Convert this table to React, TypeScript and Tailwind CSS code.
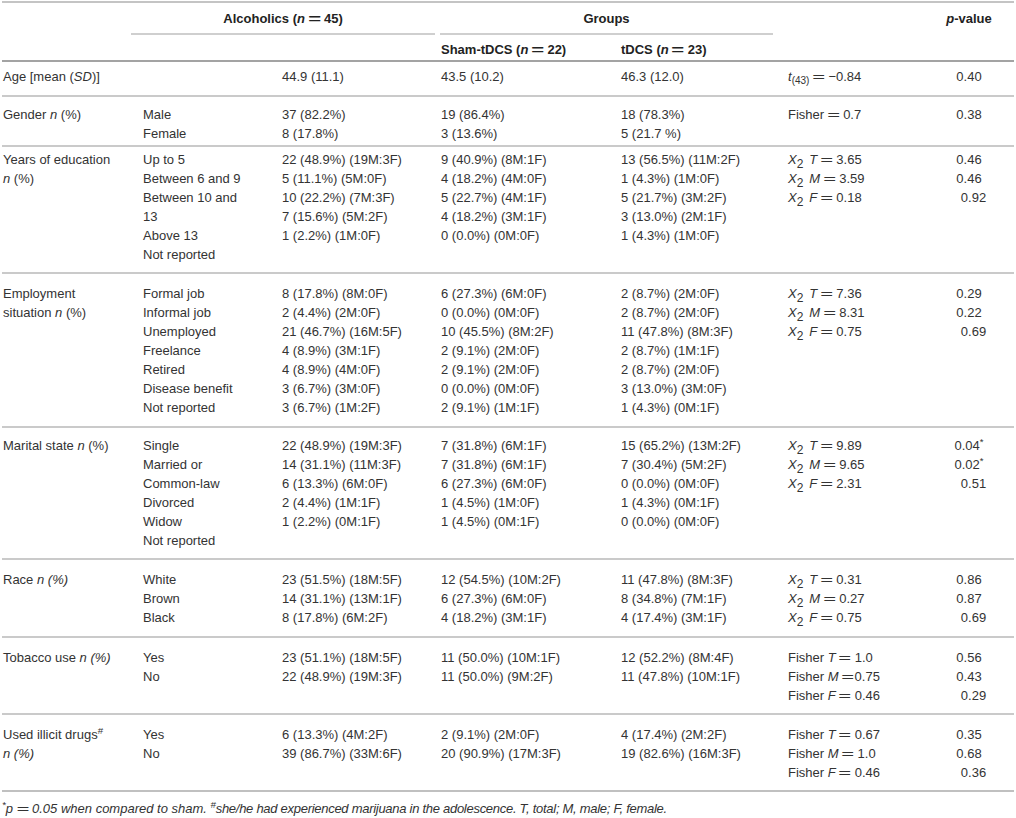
import type { ReactNode } from "react";

type Section = {
  pad: string;
  line: string;
  label: ReactNode[];
  sub: ReactNode[];
  alc: ReactNode[];
  sham: ReactNode[];
  tdcs: ReactNode[];
  stat: ReactNode[];
  p: ReactNode[];
};

const GRID = "grid grid-cols-[138px_139px_159px_180px_167px_143px_86px]";

// wide "=" like the math sign in the source table
function Eq({ tight }: { tight?: boolean }) {
  return (
    <span className={tight ? "ml-[3px] inline-block w-[13px] text-center" : "mx-[3px] inline-block w-[13px] text-center"}>
      <span className="inline-block scale-x-[1.7]">=</span>
    </span>
  );
}

function Chi({ s, v }: { s: string; v: string }) {
  return (
    <>
      <i>X</i>
      <sub className="bottom-[-4px] text-[12px]">2</sub>
      <i className="ml-[6px]">{s}</i>
      <Eq />
      {v}
    </>
  );
}

function Fisher({ s, v, tight }: { s?: string; v: string; tight?: boolean }) {
  return (
    <>
      Fisher{s && <> <i>{s}</i></>}
      <Eq tight={tight} />
      {v}
    </>
  );
}

const shift = (v: string) => <span className="pl-[9px]">{v}</span>;

const sections: Section[] = [
  {
    pad: "pt-[5px] pb-[9px]",
    line: "border-[#a3a3a3]",
    label: [<>Age [mean (<i>SD</i>)]</>],
    sub: [],
    alc: ["44.9 (11.1)"],
    sham: ["43.5 (10.2)"],
    tdcs: ["46.3 (12.0)"],
    stat: [
      <>
        <i>t</i>
        <sub className="bottom-[-3px] text-[10px]">(43)</sub>
        <Eq />
        −0.84
      </>,
    ],
    p: ["0.40"],
  },
  {
    pad: "pt-[8px] pb-[2px]",
    line: "border-[#cacaca]",
    label: [<>Gender <i>n</i> (%)</>],
    sub: ["Male", "Female"],
    alc: ["37 (82.2%)", "8 (17.8%)"],
    sham: ["19 (86.4%)", "3 (13.6%)"],
    tdcs: ["18 (78.3%)", "5 (21.7 %)"],
    stat: [<Fisher v="0.7" />],
    p: ["0.38"],
  },
  {
    pad: "pt-[3px] pb-[8px]",
    line: "border-[#cacaca]",
    label: ["Years of education", <><i>n</i> (%)</>],
    sub: ["Up to 5", "Between 6 and 9", "Between 10 and", "13", "Above 13", "Not reported"],
    alc: ["22 (48.9%) (19M:3F)", "5 (11.1%) (5M:0F)", "10 (22.2%) (7M:3F)", "7 (15.6%) (5M:2F)", "1 (2.2%) (1M:0F)"],
    sham: ["9 (40.9%) (8M:1F)", "4 (18.2%) (4M:0F)", "5 (22.7%) (4M:1F)", "4 (18.2%) (3M:1F)", "0 (0.0%) (0M:0F)"],
    tdcs: ["13 (56.5%) (11M:2F)", "1 (4.3%) (1M:0F)", "5 (21.7%) (3M:2F)", "3 (13.0%) (2M:1F)", "1 (4.3%) (1M:0F)"],
    stat: [<Chi s="T" v="3.65" />, <Chi s="M" v="3.59" />, <Chi s="F" v="0.18" />],
    p: ["0.46", "0.46", shift("0.92")],
  },
  {
    pad: "pt-[10px] pb-[9px]",
    line: "border-[#cacaca]",
    label: ["Employment", <>situation <i>n</i> (%)</>],
    sub: ["Formal job", "Informal job", "Unemployed", "Freelance", "Retired", "Disease benefit", "Not reported"],
    alc: ["8 (17.8%) (8M:0F)", "2 (4.4%) (2M:0F)", "21 (46.7%) (16M:5F)", "4 (8.9%) (3M:1F)", "4 (8.9%) (4M:0F)", "3 (6.7%) (3M:0F)", "3 (6.7%) (1M:2F)"],
    sham: ["6 (27.3%) (6M:0F)", "0 (0.0%) (0M:0F)", "10 (45.5%) (8M:2F)", "2 (9.1%) (2M:0F)", "2 (9.1%) (2M:0F)", "0 (0.0%) (0M:0F)", "2 (9.1%) (1M:1F)"],
    tdcs: ["2 (8.7%) (2M:0F)", "2 (8.7%) (2M:0F)", "11 (47.8%) (8M:3F)", "2 (8.7%) (1M:1F)", "2 (8.7%) (2M:0F)", "3 (13.0%) (3M:0F)", "1 (4.3%) (0M:1F)"],
    stat: [<Chi s="T" v="7.36" />, <Chi s="M" v="8.31" />, <Chi s="F" v="0.75" />],
    p: ["0.29", "0.22", shift("0.69")],
  },
  {
    pad: "pt-[8px] pb-[8px]",
    line: "border-[#cacaca]",
    label: [<>Marital state <i>n</i> (%)</>],
    sub: ["Single", "Married or", "Common-law", "Divorced", "Widow", "Not reported"],
    alc: ["22 (48.9%) (19M:3F)", "14 (31.1%) (11M:3F)", "6 (13.3%) (6M:0F)", "2 (4.4%) (1M:1F)", "1 (2.2%) (0M:1F)"],
    sham: ["7 (31.8%) (6M:1F)", "7 (31.8%) (6M:1F)", "6 (27.3%) (6M:0F)", "1 (4.5%) (1M:0F)", "1 (4.5%) (0M:1F)"],
    tdcs: ["15 (65.2%) (13M:2F)", "7 (30.4%) (5M:2F)", "0 (0.0%) (0M:0F)", "1 (4.3%) (0M:1F)", "0 (0.0%) (0M:0F)"],
    stat: [<Chi s="T" v="9.89" />, <Chi s="M" v="9.65" />, <Chi s="F" v="2.31" />],
    p: [<>0.04<sup>*</sup></>, <>0.02<sup>*</sup></>, shift("0.51")],
  },
  {
    pad: "pt-[10px] pb-[9px]",
    line: "border-[#cacaca]",
    label: [<>Race <i>n (%)</i></>],
    sub: ["White", "Brown", "Black"],
    alc: ["23 (51.5%) (18M:5F)", "14 (31.1%) (13M:1F)", "8 (17.8%) (6M:2F)"],
    sham: ["12 (54.5%) (10M:2F)", "6 (27.3%) (6M:0F)", "4 (18.2%) (3M:1F)"],
    tdcs: ["11 (47.8%) (8M:3F)", "8 (34.8%) (7M:1F)", "4 (17.4%) (3M:1F)"],
    stat: [<Chi s="T" v="0.31" />, <Chi s="M" v="0.27" />, <Chi s="F" v="0.75" />],
    p: ["0.86", "0.87", shift("0.69")],
  },
  {
    pad: "pt-[10px] pb-[8px]",
    line: "border-[#cacaca]",
    label: [<>Tobacco use <i>n (%)</i></>],
    sub: ["Yes", "No"],
    alc: ["23 (51.1%) (18M:5F)", "22 (48.9%) (19M:3F)"],
    sham: ["11 (50.0%) (10M:1F)", "11 (50.0%) (9M:2F)"],
    tdcs: ["12 (52.2%) (8M:4F)", "11 (47.8%) (10M:1F)"],
    stat: [<Fisher s="T" v="1.0" />, <Fisher s="M" v="0.75" tight />, <Fisher s="F" v="0.46" />],
    p: ["0.56", "0.43", shift("0.29")],
  },
  {
    pad: "pt-[10px] pb-[8px]",
    line: "border-[#cacaca]",
    label: [<>Used illicit drugs<sup>#</sup></>, <i>n (%)</i>],
    sub: ["Yes", "No"],
    alc: ["6 (13.3%) (4M:2F)", "39 (86.7%) (33M:6F)"],
    sham: ["2 (9.1%) (2M:0F)", "20 (90.9%) (17M:3F)"],
    tdcs: ["4 (17.4%) (2M:2F)", "19 (82.6%) (16M:3F)"],
    stat: [<Fisher s="T" v="0.67" />, <Fisher s="M" v="1.0" />, <Fisher s="F" v="0.46" />],
    p: ["0.35", "0.68", shift("0.36")],
  },
];

function Col({ lines, className = "" }: { lines: ReactNode[]; className?: string }) {
  return (
    <div className={className}>
      {lines.map((l, i) => (
        <div key={i} className="h-[19px] whitespace-nowrap leading-[19px]">
          {l}
        </div>
      ))}
    </div>
  );
}

export default function App() {
  return (
    <div className="min-h-screen bg-white">
      <div className="w-[1016px] px-[2px] pt-[1px] font-['Liberation_Sans',Arial,sans-serif] text-[13px] text-[#333]">
        {/* Header */}
        <div className="grid grid-cols-[129px_304px_5px_333px_155px_86px] border-t-2 border-[#c4c4c4] font-bold text-[#222]">
          <div />
          <div className="border-b-2 border-[#cfcfcf] pt-[6px] pb-[5px] text-center leading-[19px]">
            Alcoholics (<i>n</i>
            <Eq />
            45)
          </div>
          <div />
          <div className="border-b-2 border-[#cfcfcf] pt-[6px] pb-[5px] text-center leading-[19px]">Groups</div>
          <div />
          <div className="pt-[6px] pb-[5px] pr-[4px] text-center leading-[19px]">
            <i>p</i>-value
          </div>
        </div>
        <div className={`${GRID} pt-[5px] pb-[1px] font-bold text-[#222]`}>
          <div />
          <div />
          <div />
          <Col
            className="pl-[3px]"
            lines={[
              <>
                Sham-tDCS (<i>n</i>
                <Eq />
                22)
              </>,
            ]}
          />
          <Col
            className="pl-[3px]"
            lines={[
              <>
                tDCS (<i>n</i>
                <Eq />
                23)
              </>,
            ]}
          />
          <div />
          <div />
        </div>

        {/* Body */}
        {sections.map((s, i) => (
          <div key={i} className={`${GRID} border-t-2 ${s.line} ${s.pad}`}>
            <Col lines={s.label} className="pl-[1px]" />
            <Col lines={s.sub} className="pl-[3px]" />
            <Col lines={s.alc} className="pl-[3px]" />
            <Col lines={s.sham} className="pl-[3px]" />
            <Col lines={s.tdcs} className="pl-[3px]" />
            <Col lines={s.stat} className="pl-[3px]" />
            <Col lines={s.p} className="pr-[4px] text-center" />
          </div>
        ))}

        {/* Footnote */}
        <div className="border-t-2 border-[#c0c0c0] pt-[7px] leading-[19px] italic">
          <sup>*</sup>
          <i>p</i>
          <Eq />
          0.05 when compared to sham.{" "}
          <span className="tracking-[-0.28px]">
            <sup>#</sup>she/he had experienced marijuana in the adolescence. T, total; M, male; F, female.
          </span>
        </div>
      </div>
    </div>
  );
}
